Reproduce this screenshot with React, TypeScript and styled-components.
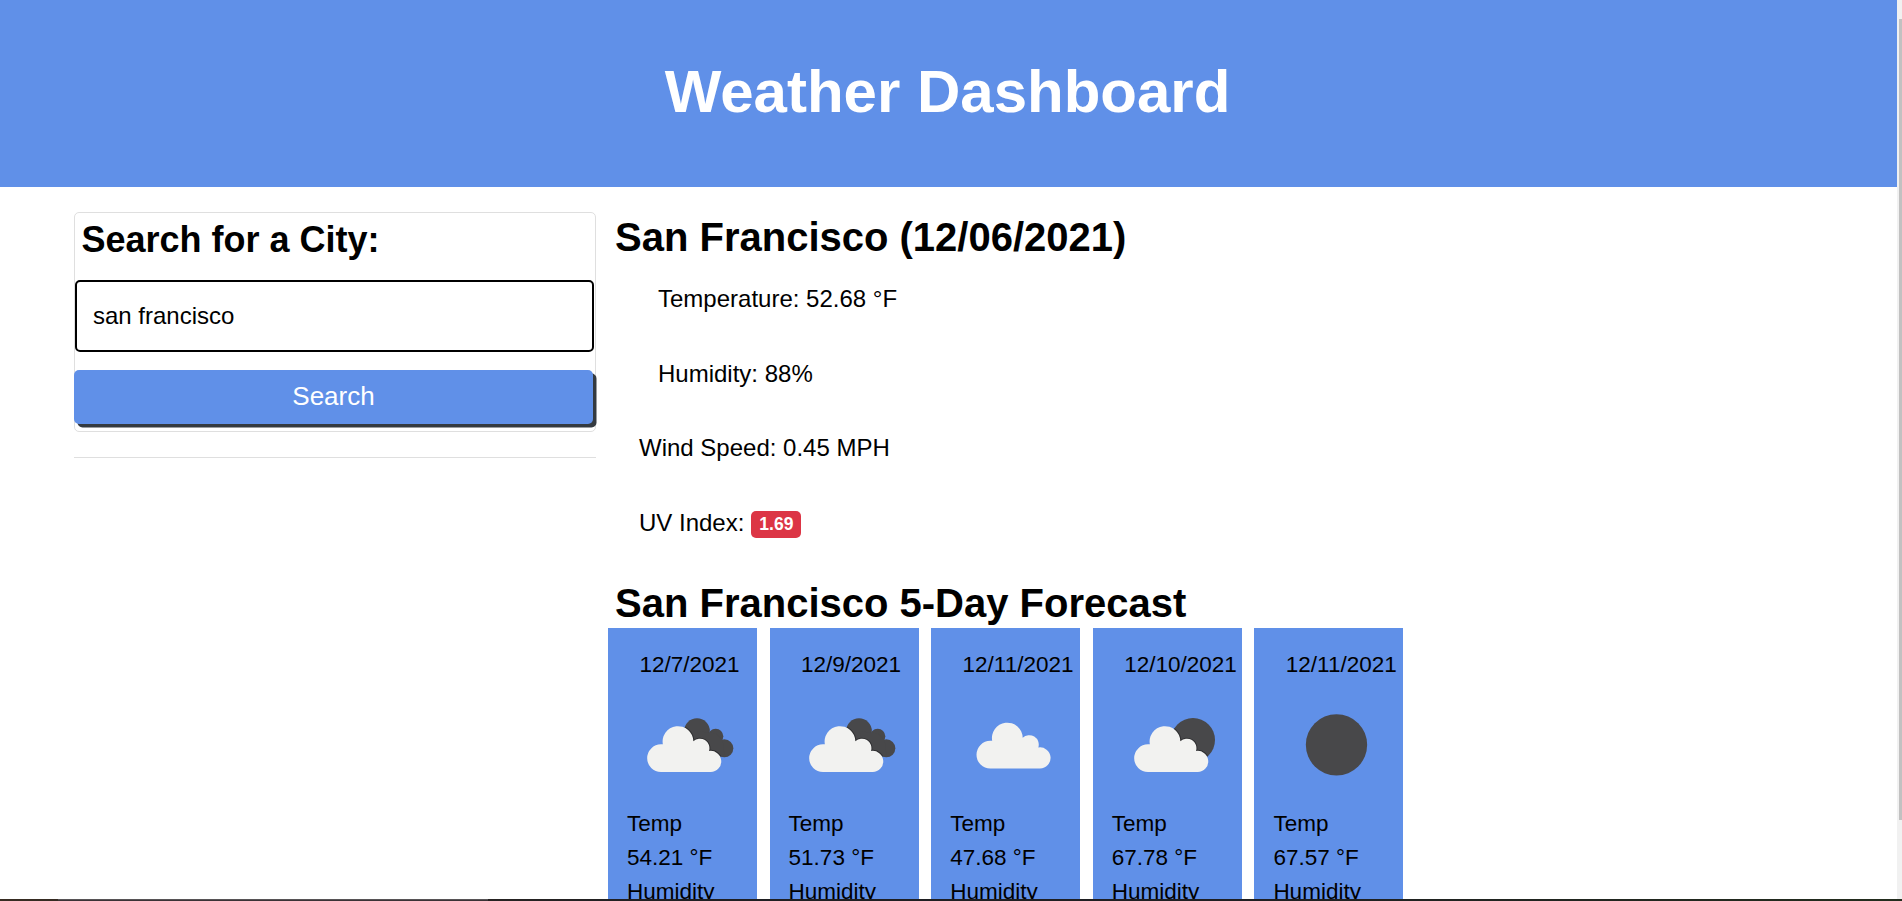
import React from "react";
import styled, { createGlobalStyle } from "styled-components";

const BLUE = "#6090e8";

const GlobalStyle = createGlobalStyle`
  *, *::before, *::after { box-sizing: border-box; }
  html, body { margin: 0; padding: 0; background: #fff; overflow: hidden; }
  body {
    font-family: "Liberation Sans", Arial, sans-serif;
    font-size: 24px;
    line-height: 34px;
    color: #000;
  }
`;

const Screen = styled.div`
  display: flex;
  flex-direction: column;
  height: 901px;
  overflow: hidden;
`;
const Viewport = styled.div`
  display: flex;
  height: 899px;
  overflow: hidden;
`;
const Page = styled.div`
  flex: 1;
  min-width: 0;
`;
const Header = styled.header`
  height: 187px;
  padding: 56px 2px 0 0;
  background: ${BLUE};
  color: #fff;
  text-align: center;
`;
const Title = styled.h1`
  margin: 0;
  font-size: 60px;
  line-height: 72px;
  font-weight: 700;
`;
const Main = styled.main`
  display: flex;
  gap: 12px;
  padding: 25px 0 0 74px;
`;
const Sidebar = styled.aside`
  width: 522px;
`;
const SearchCard = styled.form`
  height: 220px;
  border: 1px solid #dfdfdf;
  border-radius: 5px;
`;
const SearchTitle = styled.h2`
  margin: 0 0 18px;
  padding: 4px 0 0 6.5px;
  font-size: 36px;
  line-height: 45px;
`;
const SearchInput = styled.input`
  display: block;
  width: 519px;
  height: 72px;
  padding: 0 16px;
  border: 2px solid #000;
  border-radius: 5px;
  outline: 0;
  font: inherit;
  color: #000;
  background: #fff;
`;
const SearchButton = styled.button`
  display: block;
  width: 519px;
  height: 54px;
  margin: 18px 0 0 -1px;
  padding: 0 0 2px;
  border: 0;
  border-radius: 5px;
  background: ${BLUE};
  box-shadow: 3.5px 3.5px 0 #343a40;
  color: #fff;
  font: inherit;
  font-size: 26px;
`;
const Divider = styled.hr`
  height: 1px;
  margin: 25px 0 0;
  border: 0;
  background: #dfdfdf;
`;
const Content = styled.section`
  flex: 1;
`;
const Heading = styled.h2`
  margin: 0;
  padding: 1px 0 1px 7px;
  font-size: 40px;
  line-height: 48px;
`;
const Stats = styled.div`
  height: 316px;
  padding-top: 20px;
`;
const Stat = styled.p<{ $indent: number }>`
  display: flex;
  align-items: center;
  gap: 7px;
  height: 34px;
  margin: 0 0 40.6px;
  padding-left: ${(p) => p.$indent}px;
`;
const Badge = styled.span`
  width: 50px;
  height: 27px;
  margin-top: 3px;
  border-radius: 5px;
  background: #dc3545;
  color: #fff;
  font-size: 17.5px;
  line-height: 27px;
  font-weight: 700;
  text-align: center;
`;
const Forecast = styled.div`
  display: flex;
  gap: 12.6px;
`;
const Day = styled.article`
  width: 149px;
  height: 330px;
  padding: 19.5px 0 0 20px;
  background: ${BLUE};
  font-size: 22.5px;
  white-space: nowrap;
`;
const DayDate = styled.p`
  margin: 0;
  padding-left: 11.4px;
`;
const DayIcon = styled.svg`
  display: block;
  width: 125px;
  height: 125px;
`;
const DayText = styled.p`
  margin: 0 0 0 -1px;
`;
const ScrollTrack = styled.div`
  width: 5px;
  padding: 19px 0 0 2px;
  background: #f1f1f1;
`;
const ScrollThumb = styled.div`
  height: 801px;
  background: #c1c1c1;
`;
const Taskbar = styled.div`
  display: flex;
  height: 2px;
  background: linear-gradient(90deg, #372c22, #1f1f22 36%, #1f1f22 66%, #232d1e);
`;
const TaskbarSearch = styled.div`
  width: 430px;
  margin-left: 58px;
  border-top: 1px solid #575456;
  background: #3a3336;
`;

type Sky = "broken" | "cloud" | "few" | "clear";

const Cloud = ({ x, y }: { x: number; y: number }) => (
  <g transform={`translate(${x} ${y})`}>
    <path d="M42 138a41.5 41.5 0 0 1 0-83h6v2A46.1 46.1 0 1 1 139 46A28.5 28.5 0 0 1 186 75A31.7 31.7 0 1 1 191 138Z" />
  </g>
);

const Shade = ({ sky }: { sky: Sky }) =>
  sky === "broken" ? (
    <>
      <circle cx="207" cy="147" r="38.5" />
      <circle cx="263" cy="163" r="23" />
      <circle cx="289" cy="199" r="27" />
      <path d="M207 147L245 152L263 154L284 174L289 217L240 217Z" />
    </>
  ) : (
    <circle cx="240" cy="174" r="66" />
  );

const SkyIcon = ({ sky, id }: { sky: Sky; id: string }) => {
  const spot = { broken: [57, 132], cloud: [76, 121.5], few: [63, 132], clear: [0, 0] }[sky];
  return (
    <DayIcon viewBox="0 0 375 375">
      {sky === "clear" && <circle cx="187.5" cy="188.5" r="92" fill="#48484a" />}
      {(sky === "broken" || sky === "few") && (
        <>
          <clipPath id={id}>
            <Shade sky={sky} />
          </clipPath>
          <g fill="#48484a">
            <Shade sky={sky} />
          </g>
          <g clipPath={`url(#${id})`}>
            <g stroke="#2f2f31" strokeWidth="6" fill="none">
              <Cloud x={spot[0]} y={spot[1]} />
            </g>
          </g>
        </>
      )}
      {sky !== "clear" && (
        <g fill="#f2f2f0">
          <Cloud x={spot[0]} y={spot[1]} />
        </g>
      )}
    </DayIcon>
  );
};

const days: { date: string; sky: Sky; temp: string }[] = [
  { date: "12/7/2021", sky: "broken", temp: "54.21" },
  { date: "12/9/2021", sky: "broken", temp: "51.73" },
  { date: "12/11/2021", sky: "cloud", temp: "47.68" },
  { date: "12/10/2021", sky: "few", temp: "67.78" },
  { date: "12/11/2021", sky: "clear", temp: "67.57" },
];

export default function App() {
  return (
    <Screen>
      <GlobalStyle />
      <Viewport>
        <Page>
          <Header>
            <Title>Weather Dashboard</Title>
          </Header>
          <Main>
            <Sidebar>
              <SearchCard onSubmit={(e) => e.preventDefault()}>
                <SearchTitle>Search for a City:</SearchTitle>
                <SearchInput defaultValue="san francisco" />
                <SearchButton>Search</SearchButton>
              </SearchCard>
              <Divider />
            </Sidebar>
            <Content>
              <Heading>San Francisco (12/06/2021)</Heading>
              <Stats>
                <Stat $indent={50}>Temperature: 52.68 °F</Stat>
                <Stat $indent={50}>Humidity: 88%</Stat>
                <Stat $indent={31}>Wind Speed: 0.45 MPH</Stat>
                <Stat $indent={31}>
                  UV Index: <Badge>1.69</Badge>
                </Stat>
              </Stats>
              <Heading>San Francisco 5-Day Forecast</Heading>
              <Forecast>
                {days.map((d, i) => (
                  <Day key={i}>
                    <DayDate>{d.date}</DayDate>
                    <SkyIcon sky={d.sky} id={`sky-${i}`} />
                    <DayText>Temp</DayText>
                    <DayText>{d.temp} °F</DayText>
                    <DayText>Humidity</DayText>
                  </Day>
                ))}
              </Forecast>
            </Content>
          </Main>
        </Page>
        <ScrollTrack>
          <ScrollThumb />
        </ScrollTrack>
      </Viewport>
      <Taskbar>
        <TaskbarSearch />
      </Taskbar>
    </Screen>
  );
}
